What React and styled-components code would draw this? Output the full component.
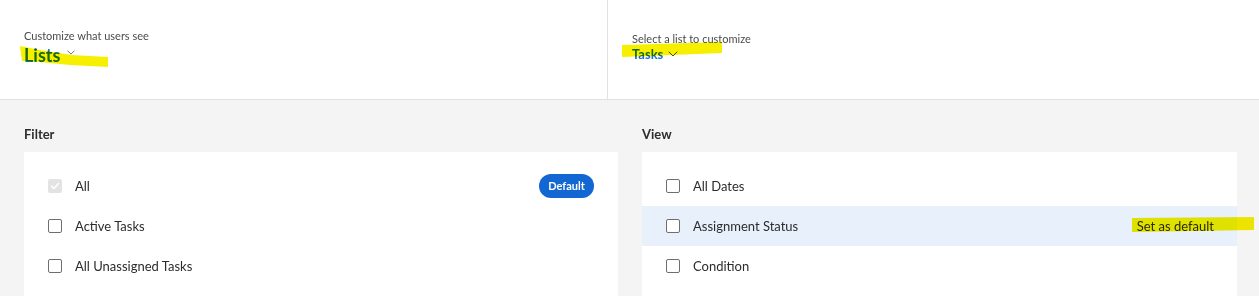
import React from "react";
import styled, { createGlobalStyle } from "styled-components";

const Global = createGlobalStyle`
  html, body { margin: 0; padding: 0; background: #f4f4f4; overflow: hidden; }
  body { font-family: Lato, "Noto Sans", sans-serif; color: #2c2c2c; }
  * { box-sizing: border-box; }
`;

const Page = styled.div`
  position: relative;
  height: 100vh;
  overflow: hidden;
  background: #f4f4f4;
`;

const Header = styled.header`
  display: flex;
  height: 100px;
  background: #fff;
  border-bottom: 1px solid #e1e1e1;
`;

const HeaderSection = styled.div`
  display: flex;
  flex-direction: column;
  width: ${(p) => p.$width || "auto"};
  flex: ${(p) => (p.$width ? "none" : "1")};
  padding: ${(p) => p.$pad};
  border-right: ${(p) => (p.$divider ? "1px solid #e1e1e1" : "none")};
`;

const Label = styled.div`
  font-size: 11px;
  line-height: 14px;
  color: #4b4b4b;
`;

const Picker = styled.div`
  display: flex;
  align-items: center;
  gap: ${(p) => (p.$big ? "7px" : "5px")};
  color: #1a6fd6;
  font-weight: 700;
  font-size: ${(p) => (p.$big ? "18px" : "13px")};
  line-height: ${(p) => (p.$big ? "20px" : "16px")};
  margin-top: ${(p) => (p.$big ? "2px" : "0")};
`;

const Chevron = ({ big }) => (
  <svg width={big ? 8 : 10} height={big ? 5 : 6} viewBox="0 0 10 6" fill="none" style={{ marginTop: big ? -6 : 0 }}>
    <path d="M1 1l4 4 4-4" stroke="#4b4b4b" strokeWidth="1" strokeLinecap="round" strokeLinejoin="round" />
  </svg>
);

const Main = styled.main`
  display: grid;
  grid-template-columns: 594px 595px;
  column-gap: 24px;
  padding: 0 22px 0 24px;
`;

const Column = styled.section`
  display: flex;
  flex-direction: column;
`;

const ColumnTitle = styled.h2`
  margin: 0;
  padding-top: 26px;
  margin-bottom: 10px;
  font-size: 13px;
  line-height: 16px;
  font-weight: 700;
  color: #2c2c2c;
`;

const Card = styled.div`
  background: #fff;
  padding: 14px 0 40px;
  min-height: 200px;
`;

const Row = styled.div`
  display: flex;
  align-items: center;
  justify-content: space-between;
  height: 40px;
  padding: 0 24px 1px;
  background: ${(p) => (p.$active ? "#e7f0fb" : "#fff")};
`;

const RowMain = styled.div`
  display: flex;
  align-items: center;
  gap: 13px;
  font-size: 13px;
  color: #2c2c2c;
`;

const Box = styled.span`
  display: inline-flex;
  align-items: center;
  justify-content: center;
  width: 14px;
  height: 14px;
  border-radius: 2px;
  border: ${(p) => (p.$disabled ? "none" : "1.5px solid #6e6e6e")};
  background: ${(p) => (p.$disabled ? "#e3e3e3" : "#fff")};
`;

const Pill = styled.span`
  display: inline-flex;
  align-items: center;
  justify-content: center;
  width: 55px;
  height: 24px;
  border-radius: 12px;
  background: #1267d3;
  color: #fff;
  font-size: 11px;
  font-weight: 700;
`;

const RowAction = styled.span`
  font-size: 13px;
  color: #2c2c2c;
  margin-right: -1px;
`;

const Marks = styled.svg`
  position: absolute;
  left: 0;
  top: 0;
  width: 1259px;
  height: 296px;
  pointer-events: none;
  mix-blend-mode: multiply;
`;

const Checkbox = ({ disabled }) => (
  <Box $disabled={disabled}>
    {disabled && (
      <svg width="10" height="8" viewBox="0 0 10 8" fill="none">
        <path d="M1.5 4l2.5 2.5 4.5-5" stroke="#fff" strokeWidth="1.6" strokeLinecap="round" strokeLinejoin="round" />
      </svg>
    )}
  </Box>
);

const filters = [
  { label: "All", disabled: true, isDefault: true },
  { label: "Active Tasks" },
  { label: "All Unassigned Tasks" },
];

const views = [
  { label: "All Dates" },
  { label: "Assignment Status", active: true },
  { label: "Condition" },
];

export default function App() {
  return (
    <Page>
      <Global />
      <Header>
        <HeaderSection $width="608px" $divider $pad="29px 24px 0 24px">
          <Label>Customize what users see</Label>
          <Picker $big>
            Lists <Chevron big />
          </Picker>
        </HeaderSection>
        <HeaderSection $pad="32px 24px 0 24px">
          <Label>Select a list to customize</Label>
          <Picker>
            Tasks <Chevron />
          </Picker>
        </HeaderSection>
      </Header>
      <Main>
        <Column>
          <ColumnTitle>Filter</ColumnTitle>
          <Card>
            {filters.map((f) => (
              <Row key={f.label}>
                <RowMain>
                  <Checkbox disabled={f.disabled} />
                  {f.label}
                </RowMain>
                {f.isDefault && <Pill>Default</Pill>}
              </Row>
            ))}
          </Card>
        </Column>
        <Column>
          <ColumnTitle>View</ColumnTitle>
          <Card>
            {views.map((v) => (
              <Row key={v.label} $active={v.active}>
                <RowMain>
                  <Checkbox />
                  {v.label}
                </RowMain>
                {v.active && <RowAction>Set as default</RowAction>}
              </Row>
            ))}
          </Card>
        </Column>
      </Main>
      <Marks viewBox="0 0 1259 296">
        <polygon points="20,46 40,50 72,55 108,57 108,67 70,65 40,62 22,61" fill="#f7ef00" />
        <polygon points="622,45 722,42 722,53 622,57" fill="#f7ef00" />
        <polygon points="1132,218 1254,217 1254,230 1132,232" fill="#f7ef00" />
      </Marks>
    </Page>
  );
}
